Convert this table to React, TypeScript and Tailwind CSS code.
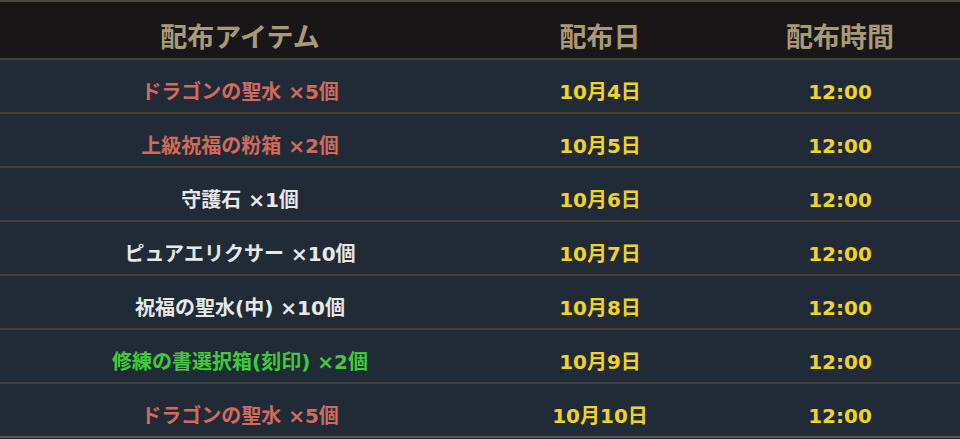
const rows = [
  { item: "ドラゴンの聖水 ×5個", color: "text-[#d26a5b]", date: "10月4日" },
  { item: "上級祝福の粉箱 ×2個", color: "text-[#d26a5b]", date: "10月5日" },
  { item: "守護石 ×1個", color: "text-[#e8e8e8]", date: "10月6日" },
  { item: "ピュアエリクサー ×10個", color: "text-[#e8e8e8]", date: "10月7日" },
  { item: "祝福の聖水(中) ×10個", color: "text-[#e8e8e8]", date: "10月8日" },
  { item: "修練の書選択箱(刻印) ×2個", color: "text-[#3ecb3a]", date: "10月9日" },
  { item: "ドラゴンの聖水 ×5個", color: "text-[#d26a5b]", date: "10月10日" },
];

export default function App() {
  return (
    <div
      className="w-[960px] h-[439px] overflow-hidden bg-[#212b38] font-bold"
      style={{ fontFamily: '"DejaVu Sans", "Noto Sans CJK JP", sans-serif' }}
    >
      {/* Header */}
      <div className="grid grid-cols-[2fr_1fr_1fr] h-[60px] pt-[16px] border-t-2 border-b-2 border-t-[#4d463b] border-b-[#4b4035] bg-[#181616] text-[27px] text-[#a99a77] leading-[40px]">
        <div className="text-center">配布アイテム</div>
        <div className="text-center">配布日</div>
        <div className="text-center">配布時間</div>
      </div>

      {/* Rows */}
      {rows.map((row, i) => (
        <div
          key={i}
          className={`grid grid-cols-[2fr_1fr_1fr] h-[54px] pt-[12px] border-b-2 text-[20px] leading-[40px] ${
            i < rows.length - 1 ? "border-[#4a3e31]" : "border-[#5a5a5a]"
          }`}
        >
          <div className={`text-center ${row.color}`}>{row.item}</div>
          <div className="text-center text-[#f0d22a]">{row.date}</div>
          <div className="text-center text-[#f0d22a]">12:00</div>
        </div>
      ))}
    </div>
  );
}
